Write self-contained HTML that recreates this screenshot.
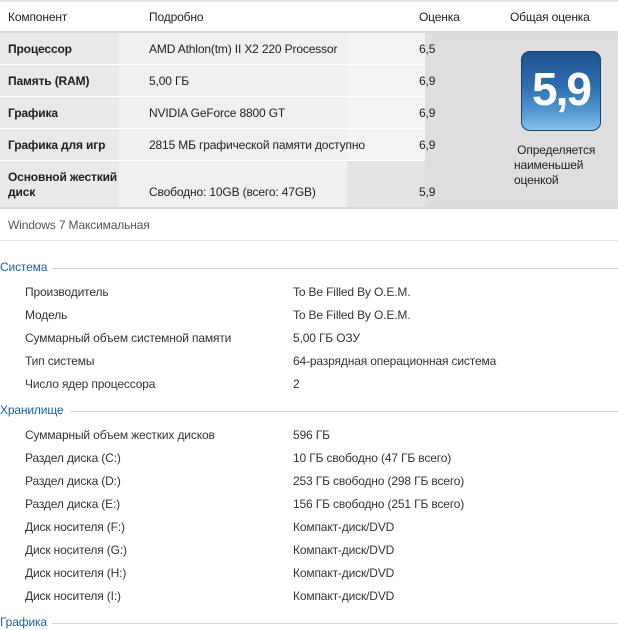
<!DOCTYPE html>
<html><head><meta charset="utf-8"><style>
body{margin:0;width:618px;height:630px;overflow:hidden;background:#fff;font-family:"Liberation Sans",sans-serif;font-size:12px;letter-spacing:-0.15px;color:#1e1e1e;position:relative}
.a{position:absolute;white-space:nowrap}
.b{font-weight:bold}
.bg{position:absolute}
.sec{position:absolute;left:0;color:#1e5ea8;font-size:12px}
.ln{position:absolute;height:1px;background:#d6d6d6;right:0}
.l{position:absolute;left:25px;color:#333}
.v{position:absolute;left:293px;color:#333}
</style></head><body>
<div class="bg" style="left:0;top:0;width:618px;height:2px;background:#e2e2e2"></div>
<div class="a" style="left:8px;top:10px">Компонент</div>
<div class="a" style="left:149px;top:10px">Подробно</div>
<div class="a" style="left:419px;top:10px">Оценка</div>
<div class="a" style="left:510px;top:10px">Общая оценка</div>
<div class="bg" style="left:0;top:31px;width:618px;height:2px;background:#d8d8d8"></div>
<div class="bg" style="left:0;top:33px;width:119px;height:174px;background:#e9e9e9"></div>
<div class="bg" style="left:119px;top:33px;width:228px;height:174px;background:#f0f0f0"></div>
<div class="bg" style="left:347px;top:33px;width:78px;height:128px;background:#f4f4f4"></div>
<div class="bg" style="left:347px;top:161px;width:78px;height:46px;background:#e3e3e3"></div>
<div class="bg" style="left:425px;top:33px;width:193px;height:174px;background:#dedede"></div>
<div class="bg" style="left:0;top:64px;width:425px;height:1px;background:#fff"></div>
<div class="bg" style="left:0;top:96px;width:425px;height:1px;background:#fff"></div>
<div class="bg" style="left:0;top:128px;width:425px;height:1px;background:#fff"></div>
<div class="bg" style="left:0;top:160px;width:425px;height:1px;background:#fff"></div>
<div class="bg" style="left:0;top:207px;width:618px;height:2px;background:#d8d8d8"></div>
<div class="a b" style="left:8px;top:42px">Процессор</div>
<div class="a" style="left:149px;top:42px">AMD Athlon(tm) II X2 220 Processor</div>
<div class="a" style="left:419px;top:42px">6,5</div>
<div class="a b" style="left:8px;top:74px">Память (RAM)</div>
<div class="a" style="left:149px;top:74px">5,00 ГБ</div>
<div class="a" style="left:419px;top:74px">6,9</div>
<div class="a b" style="left:8px;top:106px">Графика</div>
<div class="a" style="left:149px;top:106px">NVIDIA GeForce 8800 GT</div>
<div class="a" style="left:419px;top:106px">6,9</div>
<div class="a b" style="left:8px;top:138px">Графика для игр</div>
<div class="a" style="left:149px;top:138px">2815 МБ графической памяти доступно</div>
<div class="a" style="left:419px;top:138px">6,9</div>
<div class="a b" style="left:8px;top:170px;line-height:15px">Основной жесткий<br>диск</div>
<div class="a" style="left:149px;top:185px">Свободно: 10GB (всего: 47GB)</div>
<div class="a" style="left:419px;top:185px">5,9</div>
<div class="bg" style="left:521px;top:51px;width:80px;height:80px;border-radius:9px;background:linear-gradient(180deg,#1f4f8c 0%,#2f6fae 45%,#5b9fd6 80%,#8cc3ea 100%);box-shadow:0 0 0 1px #1a3f6e inset"></div>
<div class="a" style="left:521px;top:62px;width:80px;text-align:center;color:#fff;font-weight:bold;font-size:46px;letter-spacing:-2px">5,9</div>
<div class="a" style="left:514px;top:143px;line-height:15px">&nbsp;Определяется<br>наименьшей<br>оценкой</div>
<div class="a" style="left:8px;top:218px;color:#555">Windows 7 Максимальная</div>
<div class="bg" style="left:0;top:240px;width:618px;height:1px;background:#e0e0e0"></div>
<div class="sec" style="top:260px">Система</div><div class="ln" style="left:52px;top:268px"></div>
<div class="l" style="top:285px">Производитель</div><div class="v" style="top:285px">To Be Filled By O.E.M.</div>
<div class="l" style="top:308px">Модель</div><div class="v" style="top:308px">To Be Filled By O.E.M.</div>
<div class="l" style="top:331px">Суммарный объем системной памяти</div><div class="v" style="top:331px">5,00 ГБ ОЗУ</div>
<div class="l" style="top:354px">Тип системы</div><div class="v" style="top:354px">64-разрядная операционная система</div>
<div class="l" style="top:377px">Число ядер процессора</div><div class="v" style="top:377px">2</div>
<div class="sec" style="top:403px">Хранилище</div><div class="ln" style="left:70px;top:411px"></div>
<div class="l" style="top:428px">Суммарный объем жестких дисков</div><div class="v" style="top:428px">596 ГБ</div>
<div class="l" style="top:451px">Раздел диска (C:)</div><div class="v" style="top:451px">10 ГБ свободно (47 ГБ всего)</div>
<div class="l" style="top:474px">Раздел диска (D:)</div><div class="v" style="top:474px">253 ГБ свободно (298 ГБ всего)</div>
<div class="l" style="top:497px">Раздел диска (E:)</div><div class="v" style="top:497px">156 ГБ свободно (251 ГБ всего)</div>
<div class="l" style="top:520px">Диск носителя (F:)</div><div class="v" style="top:520px">Компакт-диск/DVD</div>
<div class="l" style="top:543px">Диск носителя (G:)</div><div class="v" style="top:543px">Компакт-диск/DVD</div>
<div class="l" style="top:566px">Диск носителя (H:)</div><div class="v" style="top:566px">Компакт-диск/DVD</div>
<div class="l" style="top:589px">Диск носителя (I:)</div><div class="v" style="top:589px">Компакт-диск/DVD</div>
<div class="sec" style="top:615px">Графика</div><div class="ln" style="left:52px;top:623px"></div>
</body></html>
